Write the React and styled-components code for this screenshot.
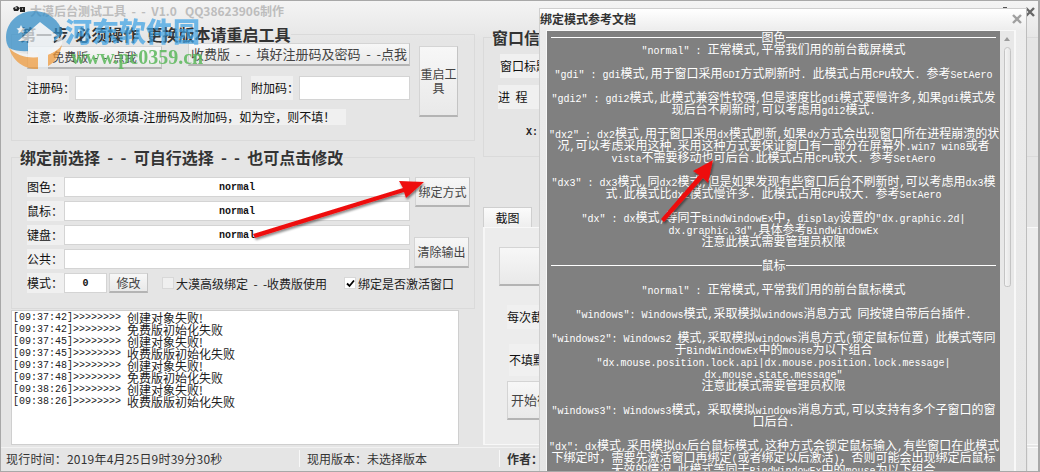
import React from 'react';
import styled, { createGlobalStyle } from 'styled-components';

const GlobalStyle = createGlobalStyle`
    html, body {
        margin: 0;
        padding: 0;
        overflow: hidden;
    }
    body {
        font-family: "Noto Sans CJK SC", "Liberation Sans", sans-serif;
        font-size: 12px;
    }
`;

const Page = styled.div`
    position: relative;
    width: 1040px;
    height: 472px;
    overflow: hidden;
    box-sizing: border-box;
    display: flex;
    flex-direction: column;
    border-top: 1px solid #a8a8a8;
    border-left: 1px solid #a8a8a8;
    border-right: 2px solid #a8a8a8;
    border-bottom: 1px solid #a8a8a8;
    background: linear-gradient(#f4f4f4 0, #e5e5e5 40px, #e5e5e5 100%);
    color: #222;
`;

const TitleBar = styled.div`
    height: 23px;
    flex: none;
    box-sizing: border-box;
    display: flex;
    align-items: center;
    padding: 0 0 4px 29px;
    font-size: 12px;
    font-weight: 700;
    color: #bdbdbd;
    white-space: pre;
`;

const Body = styled.div`
    flex: 1;
    min-height: 0;
    display: grid;
    grid-template-columns: 477px 1fr;
`;

const LeftColumn = styled.div`
    padding-left: 10px;
    display: flex;
    flex-direction: column;
`;

const RightColumn = styled.div`
    padding-left: 5px;
    display: flex;
    flex-direction: column;
`;

const Group = styled.fieldset`
    margin: ${({ $top }) => $top || 0}px 0 0;
    padding: 0 0 0 15px;
    height: ${({ $height }) => $height}px;
    width: ${({ $width }) => $width}px;
    box-sizing: border-box;
    border: 1px solid #dadada;
    min-width: 0;
`;

const Legend = styled.legend`
    margin-left: -7px;
    padding: 0;
    font-size: 16px;
    line-height: 20px;
    font-weight: 700;
    color: #333;
    white-space: pre;
`;

const Button = styled.button`
    display: block;
    margin: ${({ $margin }) => $margin || 0};
    padding: 0;
    width: ${({ $w }) => $w}px;
    height: ${({ $h }) => $h}px;
    box-sizing: border-box;
    background: linear-gradient(#f7f7f7, #e9e9e9);
    border: 1px solid #d4d4d4;
    border-right-color: #c4c4c4;
    border-bottom: 2px solid #b4b4b4;
    font: inherit;
    font-size: ${({ $size }) => $size || 12}px;
    line-height: 14px;
    color: #444;
    white-space: pre-wrap;
    flex: none;
`;

const TopFields = styled.div`
    display: flex;
`;

const TopLeft = styled.div`
    width: 383px;
    margin-top: -1px;
`;

const Row = styled.div`
    display: flex;
    align-items: ${({ $align }) => $align || 'center'};
    margin-top: ${({ $top }) => $top || 0}px;
`;

const Label = styled.label`
    flex: none;
    width: ${({ $w }) => $w}px;
    height: ${({ $h }) => $h || 24}px;
    margin-left: ${({ $left }) => $left || 0}px;
    line-height: ${({ $h }) => $h || 24}px;
    background: #f0f0f0;
    font-size: 12px;
    color: #111;
    white-space: pre;
`;

const TextBox = styled.div`
    flex: none;
    width: ${({ $w }) => $w}px;
    height: ${({ $h }) => $h}px;
    margin-left: ${({ $left }) => $left || 0}px;
    box-sizing: border-box;
    background: #fff;
    border: 1px solid #d4d4d4;
    display: flex;
    align-items: center;
    justify-content: center;
    font-family: "Liberation Mono", monospace;
    font-size: 10px;
    font-weight: 700;
    color: #111;
`;

const Note = styled.div`
    margin-top: 9px;
    width: 319px;
    height: 16px;
    line-height: 16px;
    background: #f0f0f0;
    color: #111;
    white-space: pre;
`;

const BindGrid = styled.div`
    margin-top: 10px;
    display: grid;
    grid-template-columns: 383px 1fr;
    grid-template-rows: repeat(4, 24px) 20px;
`;

const BindRow = styled.div`
    display: flex;
    grid-column: 1;
    height: 20px;
    align-items: center;
`;

const SideButtons = styled.div`
    grid-column: 2;
    grid-row: 1 / 5;
    margin-left: 4px;
`;

const ModeRow = styled.div`
    grid-column: 1 / 3;
    display: flex;
    align-items: center;
    height: 20px;
`;

const Check = styled.span`
    flex: none;
    width: 12px;
    height: 12px;
    margin-left: ${({ $left }) => $left}px;
    margin-right: 2px;
    box-sizing: border-box;
    background: ${({ $on }) => ($on ? '#fff' : '#efefef')};
    border: 1px solid #d8d8d8;
    display: flex;
    align-items: center;
    justify-content: center;
`;

const CheckText = styled.span`
    color: #222;
    white-space: pre;
`;

const LogBox = styled.div`
    margin-top: 1px;
    width: 448px;
    height: 135px;
    box-sizing: border-box;
    padding: 1px 1px;
    background: #fff;
    border: 1px solid #cfcfcf;
    font-size: 12px;
    line-height: 12px;
    color: #222;
`;

const LogLine = styled.div`
    display: flex;
    height: 12px;
    white-space: pre;
`;

const LogStamp = styled.span`
    width: 114px;
    flex: none;
    font-family: "Liberation Mono", monospace;
    font-size: 10px;
`;

const StatusBar = styled.div`
    flex: none;
    height: 24px;
    box-sizing: border-box;
    margin-top: 2px;
    padding-bottom: 2px;
    display: flex;
    align-items: center;
    border-top: 1px solid #f2f2f2;
    font-size: 12px;
    color: #333;
    white-space: pre;
`;

const StatusCell = styled.div`
    width: ${({ $w }) => $w}px;
    height: 17px;
    line-height: 17px;
    box-sizing: border-box;
    padding-left: ${({ $pad }) => $pad}px;
    border-right: 1px solid #f8f8f8;
    letter-spacing: ${({ $spread }) => $spread || 0}px;
    font-weight: ${({ $bold }) => ($bold ? 700 : 400)};
`;

const WindowInfo = styled.div`
    padding-top: 7px;
`;

const InfoLabel = styled.div`
    margin: ${({ $margin }) => $margin};
    width: 70px;
    height: 24px;
    line-height: 24px;
    background: #f0f0f0;
    color: #111;
    white-space: pre;
`;

const CoordLabel = styled.div`
    margin: 18px 0 0 27px;
    font-family: "Liberation Mono", monospace;
    font-size: 10px;
    font-weight: 700;
`;

const Tab = styled.div`
    margin-top: 50px;
    width: 49px;
    height: 20px;
    box-sizing: border-box;
    background: linear-gradient(#fbfbfb, #eeeeee);
    border: 1px solid #cfcfcf;
    border-bottom: 0;
    text-align: center;
    line-height: 19px;
    color: #111;
`;

const TabPanel = styled.div`
    width: 100%;
    height: 218px;
    box-sizing: border-box;
    background: #ececec;
    border: 1px solid #f8f8f8;
    border-left: 2px solid #f6f6f6;
    padding-left: 14px;
`;

const TabLabel = styled.div`
    margin: ${({ $margin }) => $margin};
    width: 60px;
    height: ${({ $h }) => $h}px;
    line-height: ${({ $h }) => $h}px;
    background: #f0f0f0;
    color: #111;
    white-space: pre;
`;

const WindowClose = styled.div`
    position: absolute;
    left: 1023px;
    top: 3px;
    width: 12px;
    height: 12px;
`;

const WindowMin = styled.div`
    position: absolute;
    left: 1002px;
    top: 6px;
    width: 4px;
    height: 1px;
    background: #555;
`;

const Dialog = styled.div`
    position: absolute;
    left: 538px;
    top: 7px;
    width: 488px;
    height: 480px;
    box-sizing: border-box;
    background: linear-gradient(#ffffff 0, #ececec 22px, #e6e6e6 100%);
    border: 1px solid #cfcfcf;
    border-right-color: #bdbdbd;
    display: flex;
    flex-direction: column;
`;

const DialogTitle = styled.div`
    flex: none;
    height: 21px;
    box-sizing: border-box;
    display: flex;
    align-items: center;
    justify-content: space-between;
    padding: 0 3px 2px 0;
    font-size: 12px;
    font-weight: 700;
    color: #333;
`;

const DialogBody = styled.div`
    margin-left: 6px;
    margin-right: 10px;
    display: flex;
    flex: 1;
    min-height: 0;
    box-sizing: border-box;
    border: 1px solid #f8f8f8;
    border-right-width: 2px;
`;

const DocText = styled.div`
    width: 453px;
    flex: none;
    box-sizing: border-box;
    padding: 0 2px;
    background: #808080;
    color: #fff;
    font-size: 12px;
    line-height: 12px;
    text-align: center;
    white-space: pre;
`;

const DocLine = styled.div`
    height: 12px;
`;

const DocRule = styled.div`
    display: flex;
    align-items: center;
    height: 12px;
    padding: 0 2px;
    &::before, &::after {
        content: "";
        flex: 1;
        height: 1px;
        background: #fff;
    }
`;

const Latin = styled.span`
    font-family: "Liberation Mono", monospace;
    font-size: 10px;
`;

const ScrollBar = styled.div`
    flex: 1;
    display: flex;
    flex-direction: column;
    align-items: center;
    background: #e8e8e8;
`;

const ScrollUp = styled.div`
    margin-top: 6px;
    width: 0;
    height: 0;
    border-left: 3px solid transparent;
    border-right: 3px solid transparent;
    border-bottom: 4px solid #9a9a9a;
`;

const ScrollThumb = styled.div`
    margin-top: 6px;
    width: 7px;
    height: 240px;
    box-sizing: border-box;
    background: linear-gradient(90deg, #f4f4f4, #e6e6e6);
    border: 1px solid #c4c4c4;
    border-radius: 4px 4px 3px 3px;
`;

const OuterThumb = styled.div`
    position: absolute;
    left: 1027px;
    top: 446px;
    width: 11px;
    height: 25px;
    box-sizing: border-box;
    background: #ececec;
    border-top: 1px solid #fafafa;
`;

const Arrows = styled.svg`
    position: absolute;
    left: 0;
    top: 0;
    pointer-events: none;
`;

const LogoMark = styled.svg`
    position: absolute;
    left: 3px;
    top: 8px;
    opacity: 0.72;
`;

const WatermarkName = styled.div`
    position: absolute;
    left: 64px;
    top: 12px;
    font-size: 27px;
    line-height: 36px;
    font-weight: 900;
    color: #3ea2e4;
    opacity: 0.72;
`;

const WatermarkUrl = styled.div`
    position: absolute;
    left: 70px;
    top: 44px;
    font-family: "Liberation Serif", serif;
    font-size: 20px;
    line-height: 24px;
    font-weight: 700;
    color: #5cb85c;
    opacity: 0.85;
`;

const TitleIcon = styled.svg`
    position: absolute;
    left: 11px;
    top: 3px;
`;

// splits mixed text so ascii gets the narrow mono font
const Mixed = ({ text }) => text.split(/([\x20-\x7e]+)/).map((part, i) =>
    /^[\x20-\x7e]+$/.test(part) ? <Latin key={i}>{part}</Latin> : part
);

const Cross = ({ size = 12, color = '#a0a0a0' }) => (
    <svg width={size} height={size} viewBox="0 0 12 12">
        <path d="M2 2 L10 10 M10 2 L2 10" stroke={color} strokeWidth="2.4" />
    </svg>
);

const logLines = [
    ['[09:37:42]>>>>>>>>', '创建对象失败!'],
    ['[09:37:42]>>>>>>>>', '免费版初始化失败'],
    ['[09:37:45]>>>>>>>>', '创建对象失败!'],
    ['[09:37:45]>>>>>>>>', '收费版版初始化失败'],
    ['[09:37:48]>>>>>>>>', '创建对象失败!'],
    ['[09:37:48]>>>>>>>>', '免费版初始化失败'],
    ['[09:38:26]>>>>>>>>', '创建对象失败!'],
    ['[09:38:26]>>>>>>>>', '收费版版初始化失败'],
];

const docLines = [
    { rule: '图色' },
    '"normal" : 正常模式,平常我们用的前台截屏模式',
    '',
    '"gdi" : gdi模式,用于窗口采用GDI方式刷新时. 此模式占用CPU较大. 参考SetAero',
    '',
    '"gdi2" : gdi2模式,此模式兼容性较强,但是速度比gdi模式要慢许多,如果gdi模式发',
    '现后台不刷新时,可以考虑用gdi2模式.',
    '',
    '"dx2" : dx2模式,用于窗口采用dx模式刷新,如果dx方式会出现窗口所在进程崩溃的状',
    '况,可以考虑采用这种.采用这种方式要保证窗口有一部分在屏幕外.win7 win8或者',
    'vista不需要移动也可后台.此模式占用CPU较大. 参考SetAero',
    '',
    '"dx3" : dx3模式,同dx2模式,但是如果发现有些窗口后台不刷新时,可以考虑用dx3模',
    '式.此模式比dx2模式慢许多. 此模式占用CPU较大. 参考SetAero',
    '',
    '"dx" : dx模式,等同于BindWindowEx中，display设置的"dx.graphic.2d|',
    'dx.graphic.3d",具体参考BindWindowEx',
    '注意此模式需要管理员权限',
    '',
    { rule: '鼠标' },
    '',
    '"normal" : 正常模式,平常我们用的前台鼠标模式',
    '',
    '"windows": Windows模式,采取模拟windows消息方式 同按键自带后台插件.',
    '',
    '"windows2": Windows2 模式,采取模拟windows消息方式(锁定鼠标位置) 此模式等同',
    '于BindWindowEx中的mouse为以下组合',
    '"dx.mouse.position.lock.api|dx.mouse.position.lock.message|',
    'dx.mouse.state.message"',
    '注意此模式需要管理员权限',
    '',
    '"windows3": Windows3模式，采取模拟windows消息方式,可以支持有多个子窗口的窗',
    '口后台.',
    '',
    '"dx": dx模式,采用模拟dx后台鼠标模式,这种方式会锁定鼠标输入,有些窗口在此模式',
    '下绑定时，需要先激活窗口再绑定(或者绑定以后激活)，否则可能会出现绑定后鼠标',
    '无效的情况.此模式等同于BindWindowEx中的mouse为以下组合',
];

const bindRows = [
    ['图色：', 'normal'],
    ['鼠标：', 'normal'],
    ['键盘：', 'normal'],
    ['公共：', ''],
];

const App = () => {
    return (
        <Page>
            <GlobalStyle />
            <TitleBar>{'大漠后台测试工具  -  -  V1.0   QQ38623906制作'}</TitleBar>
            <TitleIcon width="14" height="10" viewBox="0 0 14 10">
                <path d="M1 4 L5 2 L8 4 L6 7 L2 7 Z M8 3 L13 3 L13 8 L8 8 Z" fill="#222" />
                <path d="M3 4 L5 4 M10 5 L11 5" stroke="#fff" strokeWidth="1" />
            </TitleIcon>
            <Body>
                <LeftColumn>
                    <Group $height={117} $width={464}>
                        <Legend>第一步  必须操作  更换版本请重启工具</Legend>
                        <TopFields>
                            <TopLeft>
                                <Row $align="flex-start">
                                    <Button $w={135} $h={23} $margin="3px 0 0">{'免费版  -  -  点我'}</Button>
                                    <Button $w={222} $h={23} $margin="0 0 0 26px" $size={13}>{'收费版  -  -  填好注册码及密码  -  -点我'}</Button>
                                </Row>
                                <Row $top={7}>
                                    <Label $w={42} $h={24}>注册码：</Label>
                                    <TextBox $w={167} $h={24} $left={6} />
                                    <Label $w={42} $h={24} $left={9}>附加码：</Label>
                                    <TextBox $w={111} $h={24} $left={6} />
                                </Row>
                                <Note>注意：收费版-必须填-注册码及附加码，如为空，则不填！</Note>
                            </TopLeft>
                            <Button $w={39} $h={71} $margin="2px 0 0 9px" $size={12}>重启工具</Button>
                        </TopFields>
                    </Group>
                    <Group $top={6} $height={162} $width={464}>
                        <Legend>{'绑定前选择  -  -  可自行选择  -  -  也可点击修改'}</Legend>
                        <BindGrid>
                            {bindRows.map(([name, value]) => (
                                <BindRow key={name}>
                                    <Label $w={37} $h={20}>{name}</Label>
                                    <TextBox $w={346} $h={20}>{value}</TextBox>
                                </BindRow>
                            ))}
                            <SideButtons>
                                <Button $w={55} $h={30} $margin="0 0 0 1px">绑定方式</Button>
                                <Button $w={55} $h={31} $margin="30px 0 0">清除输出</Button>
                            </SideButtons>
                            <ModeRow>
                                <Label $w={37} $h={20}>模式：</Label>
                                <TextBox $w={43} $h={20}>0</TextBox>
                                <Button $w={39} $h={20} $margin="0 0 0 2px" $size={12}>修改</Button>
                                <Check $left={14} />
                                <CheckText>{'大漠高级绑定  -  -收费版使用'}</CheckText>
                                <Check $left={17} $on>
                                    <svg width="9" height="9" viewBox="0 0 9 9">
                                        <path d="M1 4.5 L3.5 7 L8 1.5" fill="none" stroke="#000" strokeWidth="1.8" />
                                    </svg>
                                </Check>
                                <CheckText>绑定是否激活窗口</CheckText>
                            </ModeRow>
                        </BindGrid>
                    </Group>
                    <LogBox>
                        {logLines.map(([stamp, text], i) => (
                            <LogLine key={i}>
                                <LogStamp>{stamp}</LogStamp>
                                <span>{text}</span>
                            </LogLine>
                        ))}
                    </LogBox>
                </LeftColumn>
                <RightColumn>
                    <Group $top={3} $height={130} $width={560}>
                        <Legend>窗口信息</Legend>
                        <WindowInfo>
                            <InfoLabel $margin="0 0 0 1px">窗口标题</InfoLabel>
                            <InfoLabel $margin="7px 0 0 -1px">{'进  程'}</InfoLabel>
                            <CoordLabel>X:</CoordLabel>
                        </WindowInfo>
                    </Group>
                    <Tab>截图</Tab>
                    <TabPanel>
                        <Button $w={60} $h={39} $margin="19px 0 0" />
                        <TabLabel $margin="19px 0 0 8px" $h={24}>每次截图</TabLabel>
                        <TabLabel $margin="15px 0 0 10px" $h={32}>不填默认</TabLabel>
                        <Button $w={60} $h={39} $margin="5px 0 0 8px" $size={13}>开始循环</Button>
                    </TabPanel>
                </RightColumn>
            </Body>
            <StatusBar>
                <StatusCell $w={299} $pad={5} $spread={0.2}>现行时间：2019年4月25日9时39分30秒</StatusCell>
                <StatusCell $w={200} $pad={7}>现用版本：未选择版本</StatusCell>
                <StatusCell $w={100} $pad={7} $bold>作者：</StatusCell>
            </StatusBar>
            <WindowMin />
            <WindowClose><Cross color="#666" /></WindowClose>
            <OuterThumb />

            <Dialog>
                <DialogTitle>
                    <span>绑定模式参考文档</span>
                    <Cross />
                </DialogTitle>
                <DialogBody>
                    <DocText>
                        {docLines.map((line, i) => (
                            line.rule
                                ? <DocRule key={i}>{line.rule}</DocRule>
                                : <DocLine key={i}><Mixed text={line} /></DocLine>
                        ))}
                    </DocText>
                    <ScrollBar>
                        <ScrollUp />
                        <ScrollThumb />
                    </ScrollBar>
                </DialogBody>
            </Dialog>

            <LogoMark width="62" height="62" viewBox="0 0 62 62">
                <path d="M5 38 C8 52 20 60 33 60 C46 60 55 50 58 36 C50 48 20 54 5 38 Z" fill="#f09a3a" />
                <path d="M30 2 C14 2 2 14 2 28 C2 33 3 36 5 39 C20 46 44 42 59 24 C55 11 44 2 30 2 Z" fill="#2f8cc8" />
                <path d="M5 39 C20 50 46 46 59 24 L58 35 C48 50 20 54 5 39 Z" fill="#f6f6f6" />
                <path d="M14 32 L36 13 L54 27 L50 28 L50 38 L44 41 L44 60 L34 60 L34 44 L24 42 L24 32 Z" fill="#eef4f8" />
                <path d="M17 16 l1.500 3 3 .5 -2.200 2 .6 3 -2.900 -1.500 -2.900 1.500 .6 -3 -2.200 -2 3 -.5 Z" fill="#eef4f8" />
            </LogoMark>
            <WatermarkName>河东软件园</WatermarkName>
            <WatermarkUrl>www.pc0359.cn</WatermarkUrl>

            <Arrows width="1040" height="472" viewBox="0 0 1040 472">
                <defs>
                    <filter id="arrowShadow" x="-10%" y="-10%" width="120%" height="130%">
                        <feDropShadow dx="1" dy="2" stdDeviation="1.200" floodColor="#000" floodOpacity="0.45" />
                    </filter>
                </defs>
                <path d="M252 233 L402 187 L398 180 L423 181 L405 197 L403 191 L254 237 Z" fill="#ee1111" filter="url(#arrowShadow)" />
                <path d="M660 218 L698 174 L692 170 L712 159 L707 182 L702 177 L663 221 Z" fill="#ee1111" filter="url(#arrowShadow)" />
            </Arrows>
        </Page>
    );
};

export default App;
